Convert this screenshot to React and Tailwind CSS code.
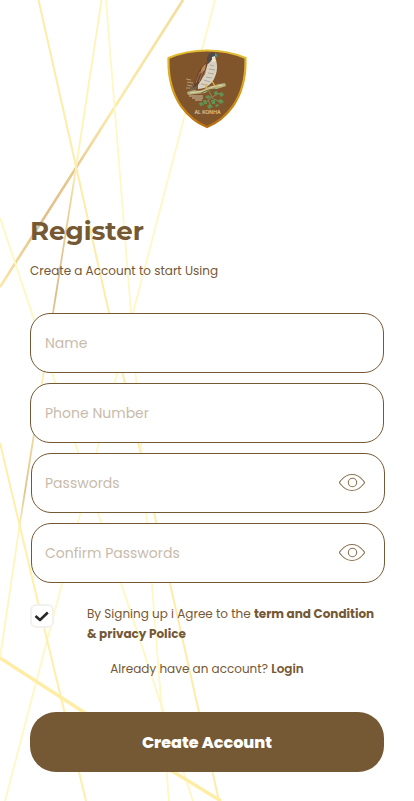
import { useState } from "react";

const FIELD =
  "h-[60px] w-full rounded-[20px] border border-[#755834] bg-white text-sm text-[#755834] outline-none placeholder:text-[#c8bbac]";

function Backdrop() {
  return (
    <svg
      className="pointer-events-none absolute left-0 top-0 -z-10"
      width="414"
      height="801"
      viewBox="0 0 414 801"
      fill="none"
      aria-hidden="true"
    >
      <defs>
        <linearGradient id="beam" gradientUnits="userSpaceOnUse" x1="183" y1="0" x2="0" y2="287">
          <stop offset="0" stopColor="#f3dc98" />
          <stop offset="0.38" stopColor="#fcebaa" />
          <stop offset="0.6" stopColor="#e6c98f" />
          <stop offset="0.78" stopColor="#dfbf88" />
          <stop offset="1" stopColor="#fbe8a6" />
        </linearGradient>
        <linearGradient id="ray" gradientUnits="userSpaceOnUse" x1="0" y1="0" x2="0" y2="655">
          <stop offset="0" stopColor="#fff3b8" />
          <stop offset="0.25" stopColor="#fff3b8" />
          <stop offset="0.3" stopColor="#ecd7a0" />
          <stop offset="0.45" stopColor="#dcbd8a" />
          <stop offset="0.58" stopColor="#fdeeb0" />
          <stop offset="0.75" stopColor="#e0c48c" />
          <stop offset="0.81" stopColor="#fff4bd" />
          <stop offset="1" stopColor="#fff6c0" />
        </linearGradient>
      </defs>
      <path d="M183 0 0 287" stroke="url(#beam)" strokeWidth="2.6" />
      <path d="M101.500 0 76 168 53 313 20 523 0 658" stroke="url(#ray)" strokeWidth="1.8" />
      <path d="M38.500 0 219 801" stroke="#fdecaa" strokeWidth="2" />
      <path d="M106 0 131 313 147 523 169 801" stroke="#fff7c4" strokeWidth="1.8" />
      <path d="M215 0 5 801" stroke="#fff7c4" strokeWidth="1.8" />
      <path d="M0 218 52 373 121 583 193 801" stroke="#fff7c0" strokeWidth="1.8" />
      <path d="M0 443 35 590 86 801" stroke="#ffefaa" strokeWidth="2" />
      <path d="M0 658 82 711 172 771 221 801" stroke="#ffeda6" strokeWidth="3.4" />
    </svg>
  );
}

function Logo() {
  return (
    <svg width="80" height="80" viewBox="0 0 80 80" role="img" aria-label="Al Konha">
      <defs>
        <linearGradient id="rim" x1="0" y1="0" x2="0" y2="1">
          <stop offset="0" stopColor="#e3bd31" />
          <stop offset="0.5" stopColor="#d9a21e" />
          <stop offset="1" stopColor="#b86d0c" />
        </linearGradient>
      </defs>
      <path
        d="M1.500 9C25-1 55-1 78.500 9C79 27 75 44 66 57C58 68 50 74 40 78C30 74 22 68 14 57C5 44 1 27 1.500 9Z"
        fill="#80552c"
        stroke="url(#rim)"
        strokeWidth="2.2"
      />
      <path d="M32 29 23 38 22 42 27 41 35 35Z" fill="#75604b" />
      <path d="M41 13C35 16 32 21 30 27L26 39 33 35 40 26 43 18Z" fill="#694228" />
      <path d="M39 15C35 17 34 21 33 25L38 21Z" fill="#c08b58" />
      <path d="M33 23 29 34M36 22 32 33M39 21 35 30" stroke="#a8764f" strokeWidth="0.9" />
      <path d="M42 11 40 17 38 25 31 36 31 40C38 40 44 36 47 30C50 24 51 18 49 11Z" fill="#d8d0c0" />
      <path
        d="M43 16 47 17M42 20 48 21M41 24 47 25M39 28 45 29M37 31 43 33M34 35 39 36"
        stroke="#a59b8b"
        strokeWidth="0.8"
      />
      <path d="M40 12C40 5 44 1 48 4L48 8 45 8 44 12 41 15Z" fill="#514a45" />
      <path d="M45 8 48 7 49 12 45 13Z" fill="#eee5cf" />
      <path d="M48 4 50 6 50 8 48 7Z" fill="#37a9b5" />
      <path d="M19 30 24 31M20 33 26 34M20 36 25 37M19 39 23 39" stroke="#bca17d" strokeWidth="0.9" />
      <path d="M20 43 27 41C32 43 36 41 41 38L52 35 58 34 59 37 50 40 44 40 38 44 28 45 21 46Z" fill="#b5b07e" />
      <path d="M23 44 37 42 45 38 56 36" stroke="#dfd8ad" strokeWidth="0.9" fill="none" />
      <path d="M34 44 41 41 48 40" stroke="#686b3c" strokeWidth="1" fill="none" />
      <path d="M40 35 39 39 42 40M45 32 48 37 51 37" stroke="#d9b05b" strokeWidth="1.3" fill="none" />
      <path d="M22 47H36M25 49H36M28 51H35" stroke="#cfc2a5" strokeWidth="1" />
      <path d="M42 42 45 48 53 44M45 48 37 55M45 49 53 53M41 51 44 57" stroke="#88996b" strokeWidth="0.8" fill="none" />
      <g fill="#5f9554">
        <path d="M38 48 41 46 44 48 41 50Z" />
        <path d="M47 43 50 42 51 45 48 47Z" />
        <path d="M52 45 55 43 57 46 54 48Z" />
        <path d="M36 51 39 51 40 55 37 55Z" />
        <path d="M32 54 35 53 37 56 33 57Z" />
        <path d="M40 57 43 55 46 58 42 60Z" />
        <path d="M44 51 48 51 48 55 45 55Z" />
        <path d="M51 51 54 50 57 53 53 55Z" />
        <path d="M48 56 51 55 52 57 49 58Z" />
      </g>
      <text
        x="40.500"
        y="65"
        textAnchor="middle"
        fontFamily="Inter, sans-serif"
        fontWeight="600"
        fontSize="5"
        fill="#e4c596"
      >
        AL KONHA
      </text>
    </svg>
  );
}

function PasswordField({ id, label }) {
  const [visible, setVisible] = useState(false);
  return (
    <div className="relative -mr-px ml-px">
      <input
        id={id}
        aria-label={label}
        type={visible ? "text" : "password"}
        placeholder={label}
        className={FIELD + " pl-[13px] pr-16"}
      />
      <button
        type="button"
        aria-label="Toggle visibility"
        onClick={() => setVisible(!visible)}
        className="absolute inset-y-0 right-[19px] flex items-center"
      >
        <svg width="28" height="20" viewBox="0 0 28 20" fill="none" stroke="#8c7350" strokeWidth="1.1" aria-hidden="true">
          <path d="M1.500 9.500C1.500 8.700 2.400 8 3.300 7C6.300 3.400 10 1.500 14 1.500C18 1.500 21.700 3.400 24.700 7C25.600 8 26.500 8.700 26.500 9.500C26.500 10.300 25.600 11 24.700 12C21.700 15.600 18 17.500 14 17.500C10 17.500 6.300 15.600 3.300 12C2.400 11 1.500 10.300 1.500 9.500Z" />
          <circle cx="14.500" cy="9.500" r="4.200" />
        </svg>
      </button>
    </div>
  );
}

export default function App() {
  return (
    <main className="relative isolate min-h-screen overflow-hidden bg-white px-[30px] pb-[29px] pt-[49px] font-['Poppins',Inter,sans-serif] text-xs leading-5 text-[#755834]">
      <Backdrop />
      <div className="flex justify-center">
        <Logo />
      </div>
      <h1 className="mt-[82px] font-['Montserrat',Inter,sans-serif] text-[26px] font-bold leading-10">Register</h1>
      <p className="mt-2.5">Create a Account to start Using</p>
      <form onSubmit={(e) => e.preventDefault()}>
        <div className="mt-8 flex flex-col gap-2.5">
          <input aria-label="Name" type="text" placeholder="Name" className={FIELD + " pl-3.5"} />
          <input aria-label="Phone Number" type="tel" placeholder="Phone Number" className={FIELD + " pl-3.5"} />
          <PasswordField id="password" label="Passwords" />
          <PasswordField id="confirm" label="Confirm Passwords" />
        </div>
        <div className="mt-[21px] flex items-start gap-[33px]">
          <span className="relative h-6 w-6 shrink-0">
            <input
              id="agree"
              type="checkbox"
              defaultChecked
              className="peer block h-6 w-6 appearance-none rounded-md border-2 border-[#f4f0f0] bg-white"
            />
            <svg
              className="pointer-events-none absolute inset-0 hidden peer-checked:block"
              width="24"
              height="24"
              viewBox="0 0 24 24"
              fill="none"
              stroke="#292929"
              strokeWidth="2.6"
              strokeLinejoin="round"
              aria-hidden="true"
            >
              <path d="M5.500 12 10 16 17.800 8.500" />
            </svg>
          </span>
          <label htmlFor="agree">
            By Signing up i Agree to the <strong className="font-bold">term and Condition &amp; privacy Police</strong>
          </label>
        </div>
        <p className="mt-[15px] text-center">
          Already have an account? <a href="#login" className="font-semibold">Login</a>
        </p>
        <button type="submit" className="mt-[33px] h-[60px] w-full rounded-[26px] bg-[#755834] pt-0.5 text-base font-extrabold text-white">
          Create Account
        </button>
      </form>
    </main>
  );
}
